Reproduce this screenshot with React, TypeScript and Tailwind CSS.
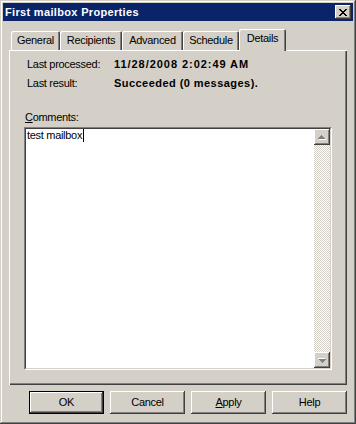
const TABS = [
  { label: 'General', w: 'w-[49px]' },
  { label: 'Recipients', w: 'w-[62px]' },
  { label: 'Advanced', w: 'w-[61px]' },
  { label: 'Schedule', w: 'w-[56px]' },
];

const raised =
  'shadow-[inset_-1px_-1px_#404040,inset_1px_1px_#ffffff,inset_-2px_-2px_#808080,inset_2px_2px_#d4d0c8]';

// 8x7 pixel close glyph
const CloseGlyph = () => (
  <svg width={8} height={7} viewBox="0 0 8 7" shapeRendering="crispEdges">
    <path d="M0 0h2v1H0zM6 0h2v1H6zM1 1h2v1H1zM5 1h2v1H5zM2 2h4v1H2zM3 3h2v1H3zM2 4h4v1H2zM1 5h2v1H1zM5 5h2v1H5zM0 6h2v1H0zM6 6h2v1H6z" fill="#000" />
  </svg>
);

const ArrowGlyph = ({ down }: { down?: boolean }) => (
  <svg width={8} height={5} viewBox="0 0 8 5" shapeRendering="crispEdges" className={down ? 'rotate-180' : ''}>
    <path d="M4 1h1v1H4zM3 2h3v1H3zM2 3h5v1H2zM1 4h7v1H1z" fill="#ffffff" />
    <path d="M3 0h1v1H3zM2 1h3v1H2zM1 2h5v1H1zM0 3h7v1H0z" fill="#808080" />
  </svg>
);

const Button = ({ children, isDefault }: { children: React.ReactNode; isDefault?: boolean }) => (
  <div
    className={
      isDefault
        ? 'w-[75px] h-[23px] border border-black bg-[#d4d0c8] flex items-center justify-center shadow-[inset_-1px_-1px_#404040,inset_1px_1px_#ffffff,inset_-2px_-2px_#808080]'
        : `w-[75px] h-[23px] bg-[#d4d0c8] flex items-center justify-center ${raised}`
    }
  >
    <span className="tracking-[-0.3px] leading-[13px]">{children}</span>
  </div>
);

export default function App() {
  return (
    <div className="w-[356px] h-[424px] bg-[#d4d0c8] p-[3px] flex flex-col text-[11px] text-black font-['Liberation_Sans',Arial,sans-serif] shadow-[inset_-1px_-1px_#404040,inset_1px_1px_#d4d0c8,inset_-2px_-2px_#808080,inset_2px_2px_#ffffff]">
      {/* Title bar */}
      <div className="h-[18px] bg-[#0a246a] flex items-center justify-between pl-[2px] pr-[2px] shrink-0">
        <span className="text-white font-bold tracking-[0.33px] leading-[13px]">First mailbox Properties</span>
        <div className={`w-[16px] h-[14px] bg-[#d4d0c8] flex items-center justify-center ${raised}`}>
          <CloseGlyph />
        </div>
      </div>

      <div className="px-[6px] pt-[8px] flex flex-col">
        {/* Tabs */}
        <div className="flex items-end h-[21px] pl-[2px]">
          {TABS.map((t) => (
            <div
              key={t.label}
              className={`${t.w} h-[19px] rounded-t-[2px] flex items-center justify-center shadow-[inset_1px_1px_#ffffff,inset_-1px_0_#404040,inset_-2px_0_#808080]`}
            >
              <span className="tracking-[-0.3px] leading-[13px]">{t.label}</span>
            </div>
          ))}
          <div className="relative z-10 w-[47px] h-[22px] -mb-px bg-[#d4d0c8] rounded-t-[2px] flex items-start justify-center pt-[3px] shadow-[inset_1px_1px_#ffffff,inset_-1px_0_#404040,inset_-2px_0_#808080]">
            <span className="tracking-[-0.3px] leading-[13px]">Details</span>
          </div>
        </div>

        {/* Panel */}
        <div className="h-[335px] flex flex-col shadow-[inset_1px_1px_#ffffff,inset_-1px_-1px_#404040,inset_-2px_-2px_#808080]">
          <div className="pl-[18px] pt-[8px] flex flex-col gap-[6px]">
            <div className="flex leading-[13px]">
              <span className="w-[87px] tracking-[-0.3px]">Last processed:</span>
              <span className="font-bold tracking-[0.95px]">11/28/2008 2:02:49 AM</span>
            </div>
            <div className="flex leading-[13px]">
              <span className="w-[87px] tracking-[-0.3px]">Last result:</span>
              <span className="font-bold tracking-[0.45px]">Succeeded (0 messages).</span>
            </div>
          </div>

          <div className="ml-[15px] mt-[21px] flex flex-col">
            <span className="pl-px leading-[13px] tracking-[-0.3px]">
              <span className="underline">C</span>omments:
            </span>
            {/* Sunken text box */}
            <div className="mt-[3px] w-[308px] h-[243px] border border-t-[#808080] border-l-[#808080] border-b-white border-r-white">
              <div className="h-full border border-t-[#404040] border-l-[#404040] border-b-[#d4d0c8] border-r-[#d4d0c8] flex">
                <div className="flex-1 bg-white pl-px">
                  <div className="leading-[13px] tracking-[-0.3px] flex items-start">
                    test mailbox<span className="inline-block w-px h-[13px] bg-black ml-px" />
                  </div>
                </div>
                <div className="w-[16px] flex flex-col bg-[repeating-conic-gradient(#d4d0c8_0%_25%,#ffffff_0%_50%)] bg-[length:2px_2px]">
                  <div className={`h-[16px] bg-[#d4d0c8] flex items-center justify-center ${raised}`}>
                    <ArrowGlyph />
                  </div>
                  <div className="flex-1" />
                  <div className={`h-[16px] bg-[#d4d0c8] flex items-center justify-center ${raised}`}>
                    <ArrowGlyph down />
                  </div>
                </div>
              </div>
            </div>
          </div>
        </div>

        {/* Dialog buttons */}
        <div className="mt-[6px] flex justify-end gap-[6px]">
          <Button isDefault>OK</Button>
          <Button>Cancel</Button>
          <Button>
            <span className="underline">A</span>pply
          </Button>
          <Button>Help</Button>
        </div>
      </div>
    </div>
  );
}
